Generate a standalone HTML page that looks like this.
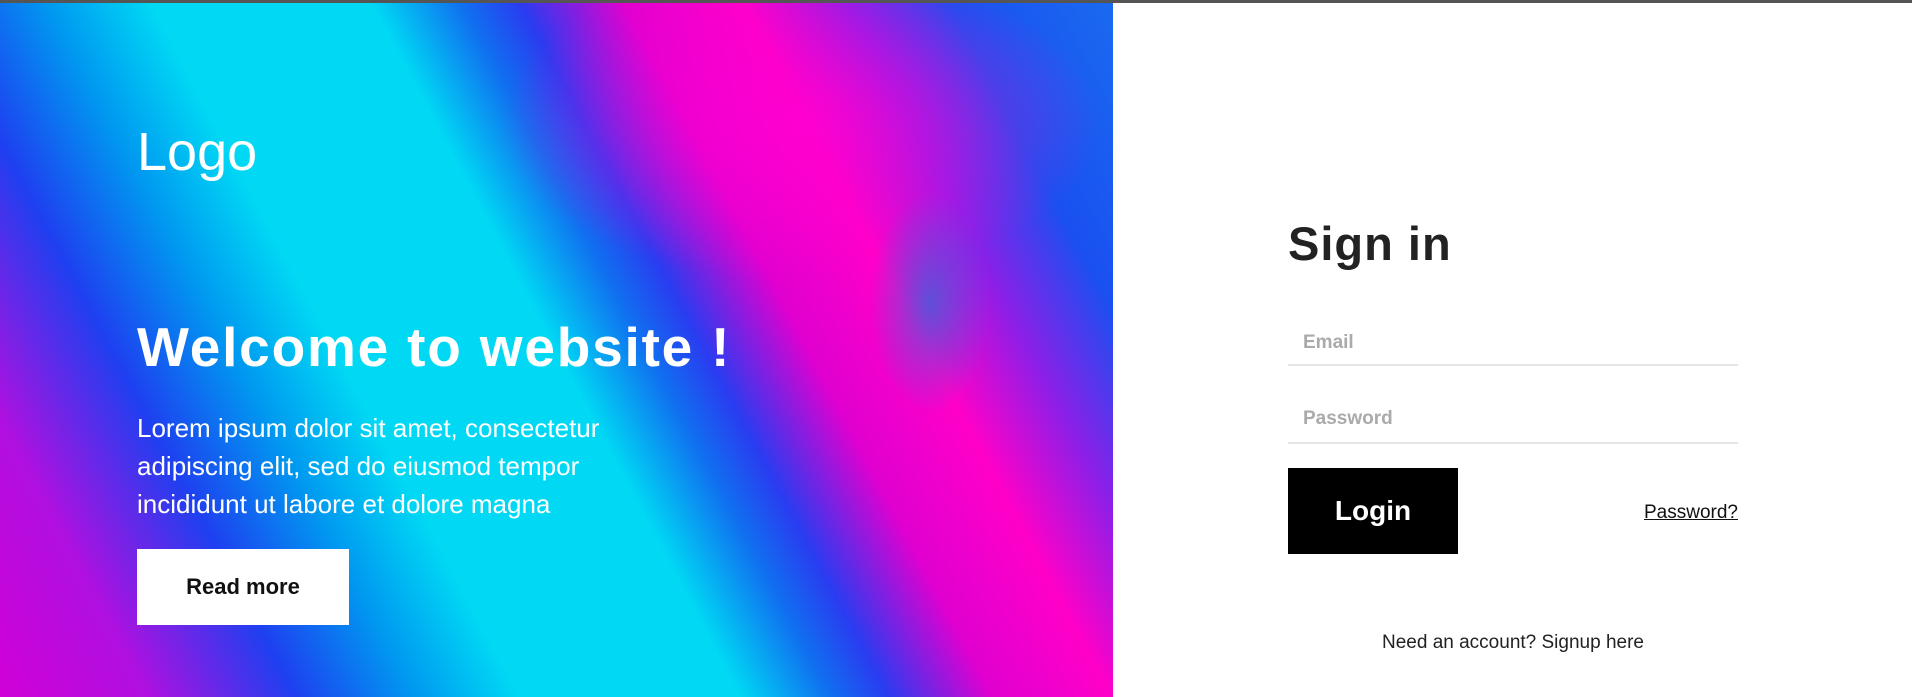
<!DOCTYPE html>
<html><head><meta charset="utf-8"><style>
*{margin:0;padding:0;box-sizing:border-box}
html,body{width:1912px;height:697px;overflow:hidden;background:#fff;font-family:"Liberation Sans",sans-serif}
.top{position:absolute;left:0;top:0;width:1912px;height:3px;background:#555}
.left{position:absolute;left:0;top:3px;width:1113px;height:694px;overflow:hidden;
background:
radial-gradient(ellipse 60px 110px at 930px 300px, rgba(40,110,220,.7), rgba(40,110,220,0)),
radial-gradient(ellipse 300px 160px at 800px 120px, rgba(255,0,210,.7), rgba(255,0,210,0)),
linear-gradient(62deg,#d000d8 0%,#b010e0 10%,#1e40f0 20%,#0098f0 28%,#00d8f4 35%,#00d8f4 50%,#1070f0 56%,#2a3cf0 60%,#e000d0 67%,#ff00c8 75%,#8a20e8 82%,#1a50f0 89%,#1a6af0 100%);}
.logo{position:absolute;left:137px;top:117px;color:#fff;font-size:54px;line-height:64px}
h1{position:absolute;left:137px;top:311px;color:#fff;font-size:55px;font-weight:bold;line-height:66px;white-space:nowrap;letter-spacing:1.8px}
.p{position:absolute;left:137px;top:406px;color:#fff;font-size:26px;line-height:38px;width:530px}
.btn1{position:absolute;left:137px;top:546px;width:212px;height:76px;background:#fff;color:#111;font-weight:bold;font-size:22px;line-height:76px;text-align:center}
.signin{position:absolute;left:1288px;top:214px;font-size:47px;font-weight:bold;color:#222;letter-spacing:1px;line-height:60px}
.field{position:absolute;left:1288px;width:450px;border-bottom:2px solid #e6e6e6;color:#aaa;font-weight:bold;font-size:19px;padding-left:15px}
.login{position:absolute;left:1288px;top:468px;width:170px;height:86px;background:#000;color:#fff;font-weight:bold;font-size:28px;line-height:86px;text-align:center}
.fp{position:absolute;right:174px;top:502px;font-size:19px;color:#111;text-decoration:underline}
.need{position:absolute;left:1288px;width:450px;top:632px;text-align:center;font-size:19px;color:#222}
</style></head><body>
<div class="top"></div>
<div class="left">
<div class="logo">Logo</div>
<h1>Welcome to website !</h1>
<div class="p">Lorem ipsum dolor sit amet, consectetur adipiscing elit, sed do eiusmod tempor incididunt ut labore et dolore magna</div>
<div class="btn1">Read more</div>
</div>
<div class="signin">Sign in</div>
<div class="field" style="top:332px;height:34px">Email</div>
<div class="field" style="top:408px;height:36px">Password</div>
<div class="login">Login</div>
<div class="fp">Password?</div>
<div class="need">Need an account? Signup here</div>
</body></html>
